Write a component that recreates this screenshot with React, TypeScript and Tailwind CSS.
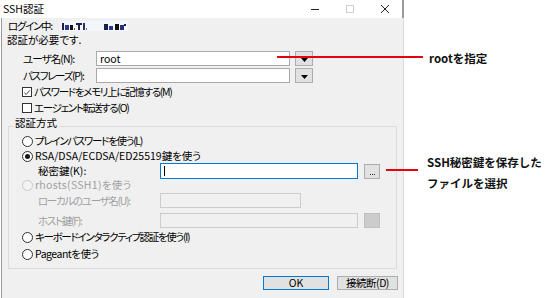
import React from 'react';

// --- shared font stack: Meiryo UI-ish look via Noto CJK with proportional kana ---
const UI = "font-['Noto_Sans_CJK_JP','Noto_Sans',sans-serif] [font-feature-settings:'palt'] text-[10.5px] leading-[12px] whitespace-nowrap";
// Meiryo UI kana are much narrower than Noto's, so kana-heavy labels get pulled in
const KANA = 'tracking-[-1.3px]';

// --- SMALL WIN10 CONTROLS ---
const CheckBox = ({ checked }: { checked?: boolean }) => (
    <span className="flex h-[10px] w-[10px] shrink-0 items-center justify-center border border-[#333] bg-white">
        {checked && (
            <svg viewBox="0 0 10 10" className="h-[9px] w-[9px]">
                <path d="M1.6 5.2 L4 7.5 L8.4 2.4" fill="none" stroke="#222" strokeWidth="1.1" />
            </svg>
        )}
    </span>
);

const Radio = ({ checked, disabled }: { checked?: boolean; disabled?: boolean }) => (
    <span
        className={`flex h-[11px] w-[11px] shrink-0 items-center justify-center rounded-full border ${
            disabled ? 'border-[#c8c8c8] bg-[#f4f4f4]' : 'border-[#333] bg-white'
        }`}
    >
        {checked && <span className="h-[5px] w-[5px] rounded-full bg-[#1a1a1a]" />}
    </span>
);

const TextBox = ({
    width,
    tall = false,
    value,
    focus = false,
    disabled = false
}: {
    width: string;
    tall?: boolean;
    value?: string;
    focus?: boolean;
    disabled?: boolean;
}) => (
    <div
        className={`flex shrink-0 items-center pl-[3px] ${width} ${tall ? 'h-[16px]' : 'h-[15px]'} border ${
            focus ? 'border-[#0078d7] bg-white' : disabled ? 'border-[#cccccc] bg-[#f0f0f0]' : 'border-[#a9a9a9] bg-white'
        }`}
    >
        {value && <span className="text-black">{value}</span>}
        {focus && <span className="h-[10px] w-px bg-black" />}
    </div>
);

const ComboArrow = () => (
    <span className="ml-[5px] flex h-[15px] w-[18px] shrink-0 items-end justify-center border border-[#adadad] bg-[#e1e1e1] pb-[3px]">
        <svg viewBox="0 0 7 4" className="h-[4px] w-[7px]">
            <path d="M0 0 H7 L3.5 4 Z" fill="#000" />
        </svg>
    </span>
);

const Browse = ({ disabled = false }: { disabled?: boolean }) => (
    <span
        className={`ml-[6px] flex h-[15px] w-[16px] shrink-0 items-end justify-center border pb-[3px] ${
            disabled ? 'border-[#bfbfbf] bg-[#cccccc]' : 'border-[#adadad] bg-[#e1e1e1]'
        }`}
    >
        {!disabled && (
            <span className="flex gap-px">
                <span className="h-px w-px bg-[#333]" />
                <span className="h-px w-px bg-[#333]" />
                <span className="h-px w-px bg-[#333]" />
            </span>
        )}
    </span>
);

// pixelated (blurred) host name in the original capture
const Mosaic = () => (
    <svg width="68" height="10" viewBox="0 0 68 10" className="shrink-0">
        <rect x="0" y="0" width="68" height="10" fill="#f3f6fb" />
        <rect x="2" y="2" width="2" height="7" fill="#1b1f4a" />
        <rect x="5" y="4" width="4" height="5" fill="#2c3a8c" />
        <rect x="10" y="4" width="3" height="5" fill="#111" />
        <rect x="14" y="7" width="1" height="2" fill="#555" />
        <rect x="16" y="2" width="6" height="2" fill="#1c2250" />
        <rect x="18" y="4" width="2" height="5" fill="#1c2250" />
        <rect x="23" y="2" width="2" height="7" fill="#2a2f6a" />
        <rect x="26" y="7" width="1" height="2" fill="#6a78b8" />
        <rect x="44" y="3" width="4" height="6" fill="#1b1f4a" />
        <rect x="49" y="5" width="4" height="4" fill="#2c3a8c" />
        <rect x="55" y="3" width="4" height="6" fill="#111" />
        <rect x="60" y="4" width="4" height="5" fill="#26307a" />
        <rect x="64" y="3" width="2" height="2" fill="#1b1f4a" />
    </svg>
);

// --- DIALOG ---
const SshAuthDialog = () => (
    <div className={`flex h-[298px] w-[404px] shrink-0 flex-col ${UI}`}>
        {/* title bar */}
        <div className="flex h-[18px] shrink-0 items-center border-r-2 border-[#9a9a9a] bg-white">
            <span className="pl-[3px] text-black">SSH認証</span>
            <div className="ml-auto flex h-full">
                <span className="flex w-[35px] items-center justify-center">
                    <span className="h-px w-[8px] bg-[#222]" />
                </span>
                <span className="flex w-[35px] items-center justify-center">
                    <span className="h-[8px] w-[8px] border border-[#cfcfcf]" />
                </span>
                <span className="flex w-[35px] items-center justify-center">
                    <svg viewBox="0 0 8 8" className="h-[8px] w-[8px]">
                        <path d="M0 0 L8 8 M8 0 L0 8" stroke="#222" strokeWidth="1" />
                    </svg>
                </span>
            </div>
        </div>

        {/* body */}
        <div className="ml-[1px] flex flex-1 flex-col border-l border-r border-l-[#9b9b9b] border-r-[#dadada] bg-[#f0f0f0] text-black">
            <div className="mt-[1px] flex h-[14px] items-center pl-[6px]">
                <span className={`w-[52px] ${KANA}`}>ログイン中:</span>
                <Mosaic />
            </div>
            <div className="flex h-[14px] items-center pl-[5px]">認証が必要です.</div>

            <div className="mt-[4px] flex h-[15px] items-center pl-[21px]">
                <span className={`w-[73px] tracking-[-0.9px]`}>ユーザ名(N):</span>
                <TextBox width="w-[194px]" value="root" />
                <ComboArrow />
            </div>
            <div className="mt-[2px] flex h-[15px] items-center pl-[21px]">
                <span className={`w-[73px] ${KANA}`}>パスフレーズ(P):</span>
                <TextBox width="w-[194px]" />
                <ComboArrow />
            </div>

            <div className="mt-[2px] flex h-[14px] items-center gap-[2px] pl-[20px]">
                <CheckBox checked />
                <span className={KANA}>パスワードをメモリ上に記憶する(M)</span>
            </div>
            <div className="mt-[2px] flex h-[14px] items-center gap-[2px] pl-[20px]">
                <CheckBox />
                <span className={KANA}>エージェント転送する(O)</span>
            </div>

            {/* 認証方式 group */}
            <fieldset className="ml-[6px] mt-[2px] w-[389px] border border-[#dcdcdc] px-0 pb-[8px]">
                <legend className="ml-[5px] px-[1px] pb-[6px]">認証方式</legend>

                <div className="flex h-[12px] items-center gap-[2px] pl-[13px]">
                    <Radio />
                    <span className={KANA}>プレインパスワードを使う(L)</span>
                </div>
                <div className="mt-[3px] flex h-[12px] items-center gap-[2px] pl-[13px]">
                    <Radio checked />
                    <span>RSA/DSA/ECDSA/ED25519鍵を使う</span>
                </div>
                <div className="mt-[1px] flex h-[16px] items-center pl-[29px]">
                    <span className="w-[122px]">秘密鍵(K):</span>
                    <TextBox width="w-[198px]" tall focus />
                    <Browse />
                </div>
                <div className="flex h-[12px] items-center gap-[2px] pl-[13px] text-[#a0a0a0]">
                    <Radio disabled />
                    <span className="tracking-[0.3px]">rhosts(SSH1)を使う</span>
                </div>
                <div className="mt-[2px] flex h-[15px] items-center pl-[29px] text-[#a0a0a0]">
                    <span className={`w-[122px] ${KANA}`}>ローカルのユーザ名(U):</span>
                    <TextBox width="w-[141px]" disabled />
                </div>
                <div className="mt-[5px] flex h-[15px] items-center pl-[29px] text-[#a0a0a0]">
                    <span className={`w-[122px] ${KANA}`}>ホスト鍵(F):</span>
                    <TextBox width="w-[198px]" disabled />
                    <Browse disabled />
                </div>
                <div className="mt-[3px] flex h-[12px] items-center gap-[2px] pl-[13px]">
                    <Radio />
                    <span className={KANA}>キーボードインタラクティブ認証を使う(I)</span>
                </div>
                <div className="mt-[5px] flex h-[12px] items-center gap-[2px] pl-[13px]">
                    <Radio />
                    <span className="tracking-[-0.5px]">Pageantを使う</span>
                </div>
            </fieldset>

            <div className="mt-[7px] flex justify-end gap-[8px] pr-[5px]">
                <button className="flex h-[14px] w-[66px] items-center justify-center border border-[#0078d7] bg-[#e1e1e1]">
                    OK
                </button>
                <button className="flex h-[14px] w-[61px] items-center justify-center border border-[#adadad] bg-[#e1e1e1] tracking-[-0.5px]">
                    接続断(D)
                </button>
            </div>
        </div>
    </div>
);

// --- MAIN ---
export default function App() {
    return (
        <div className="relative h-[298px] w-[555px] overflow-hidden bg-white">
            <SshAuthDialog />

            {/* annotation callouts drawn over the capture */}
            <div className="absolute left-[277px] top-[56px] h-[2px] w-[146px] bg-[#e60012]" />
            <div className="absolute left-[429px] top-[50px] font-['Noto_Sans_CJK_JP',sans-serif] text-[11.5px] font-bold leading-[16px] text-[#111]">
                rootを指定
            </div>

            <div className="absolute left-[386px] top-[169px] h-[2px] w-[32px] bg-[#e60012]" />
            <div className="absolute left-[427px] top-[152px] flex flex-col font-['Noto_Sans_CJK_JP',sans-serif] text-[11.5px] font-bold leading-[21px] text-[#111]">
                <span>SSH秘密鍵を保存した</span>
                <span>ファイルを選択</span>
            </div>
        </div>
    );
}
